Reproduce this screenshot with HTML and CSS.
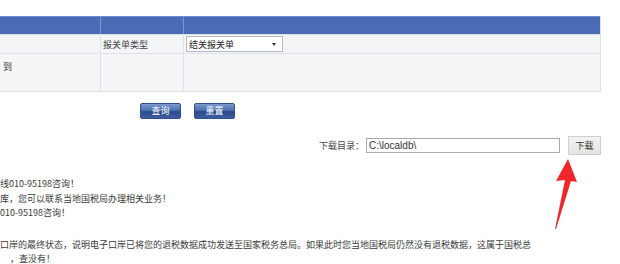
FILE: index.html
```html
<!DOCTYPE html>
<html lang="zh-CN">
<head>
    <meta charset="UTF-8">
    <title>退税数据下载</title>
    <link rel="stylesheet" href="styles.css">
</head>
<body>
<div class="page">
    <!-- query form -->
    <div class="form">
        <div class="cell head"></div>
        <div class="cell head"></div>
        <div class="cell head"></div>

        <div class="cell"></div>
        <div class="cell label">报关单类型</div>
        <div class="cell">
            <div class="select">
                <span>结关报关单</span>
                <span class="caret"></span>
            </div>
        </div>

        <div class="cell tall"><span class="to">到</span></div>
        <div class="cell tall"></div>
        <div class="cell tall"></div>
    </div>

    <div class="actions">
        <button class="btn">查询</button>
        <button class="btn">重置</button>
    </div>

    <div class="download">
        <span>下载目录：</span>
        <div class="path">C:\localdb\</div>
        <button class="dl-btn">下载</button>
        <svg class="arrow" width="40" height="80" viewBox="0 0 40 80">
            <path d="M27 0 L36 23 L30 22 L15 70 L14 70 L24 21 L15 22 Z" fill="#f0262a"/>
        </svg>
    </div>

    <div class="notes">
        <p>线010-95198咨询！</p>
        <p>库，您可以联系当地国税局办理相关业务！</p>
        <p>010-95198咨询！</p>
    </div>
    <div class="notes second">
        <p>口岸的最终状态，说明电子口岸已将您的退税数据成功发送至国家税务总局。如果此时您当地国税局仍然没有退税数据，这属于国税总</p>
        <p class="indent">，查没有！</p>
    </div>
</div>
</body>
</html>
```

FILE: styles.css
```css
*{
    margin: 0;
    padding: 0;
    box-sizing: border-box;
}

body{
    background: #fff;
    font-family: "Noto Sans CJK SC", "Liberation Sans", sans-serif;
    font-size: 9px;
    color: #333;
}

.page{
    width: 620px;
    height: 264px;
    overflow: hidden;
    position: relative;
}

.form{
    margin-top: 16px;
    width: 601px;
    display: grid;
    grid-template-columns: 100px 83px 1fr;
    grid-template-rows: 18px 19px 38px;
    background: #f4f5f7;
    border-right: 1px solid #dde2ea;
    border-bottom: 1px solid #dde2ea;
}

.cell{
    border-left: 1px solid #dde2ea;
    border-top: 1px solid #dde2ea;
    display: flex;
    align-items: center;
    padding-left: 2px;
}

.cell:nth-child(3n+1){
    border-left: 0;
}

.cell.head{
    background: #4a6bb5;
    border-top: 1px solid #6f8cca;
    border-left-color: #7b96d0;
}

.cell.tall{
    align-items: flex-start;
    padding-top: 6px;
}

.label{
    color: #444;
}

.select{
    width: 97px;
    height: 16px;
    background: #fff;
    border: 1px solid #b4bac4;
    display: flex;
    align-items: center;
    justify-content: space-between;
    padding: 0 6px 0 2px;
    color: #222;
}

.caret{
    width: 0;
    height: 0;
    border-left: 2px solid transparent;
    border-right: 2px solid transparent;
    border-top: 3px solid #333;
}

.to{
    margin-left: 1px;
}

.actions{
    display: flex;
    gap: 13px;
    padding-left: 140px;
    margin-top: 11px;
}

.btn{
    width: 41px;
    height: 16px;
    border: 1px solid #2f4f8c;
    border-radius: 2px;
    background: linear-gradient(#7d9ad0, #4d6fb0 45%, #2c4b8e 55%, #3d5ea0);
    color: #fff;
    font-family: inherit;
    font-size: 9px;
    line-height: 14px;
}

.download{
    display: flex;
    align-items: center;
    justify-content: flex-end;
    padding-right: 19px;
    margin-top: 16px;
    height: 20px;
    color: #444;
    position: relative;
}

.path{
    width: 194px;
    height: 15px;
    margin-left: 2px;
    border: 1px solid #a9a9a9;
    background: #fff;
    font-family: "Liberation Sans", sans-serif;
    font-size: 10px;
    line-height: 13px;
    padding-left: 2px;
    color: #333;
}

.dl-btn{
    margin-left: 8px;
    width: 33px;
    height: 19px;
    border: 1px solid #cfcfcf;
    background: linear-gradient(#f4f4f4, #e2e2e2);
    font-family: inherit;
    font-size: 9px;
    color: #333;
}

.arrow{
    position: absolute;
    left: 541px;
    top: 24px;
}

.notes{
    margin-top: 22px;
    line-height: 14.5px;
    color: #3a3a3a;
    white-space: nowrap;
}

.notes.second{
    margin-top: 17px;
}

.indent{
    padding-left: 10px;
}
```
